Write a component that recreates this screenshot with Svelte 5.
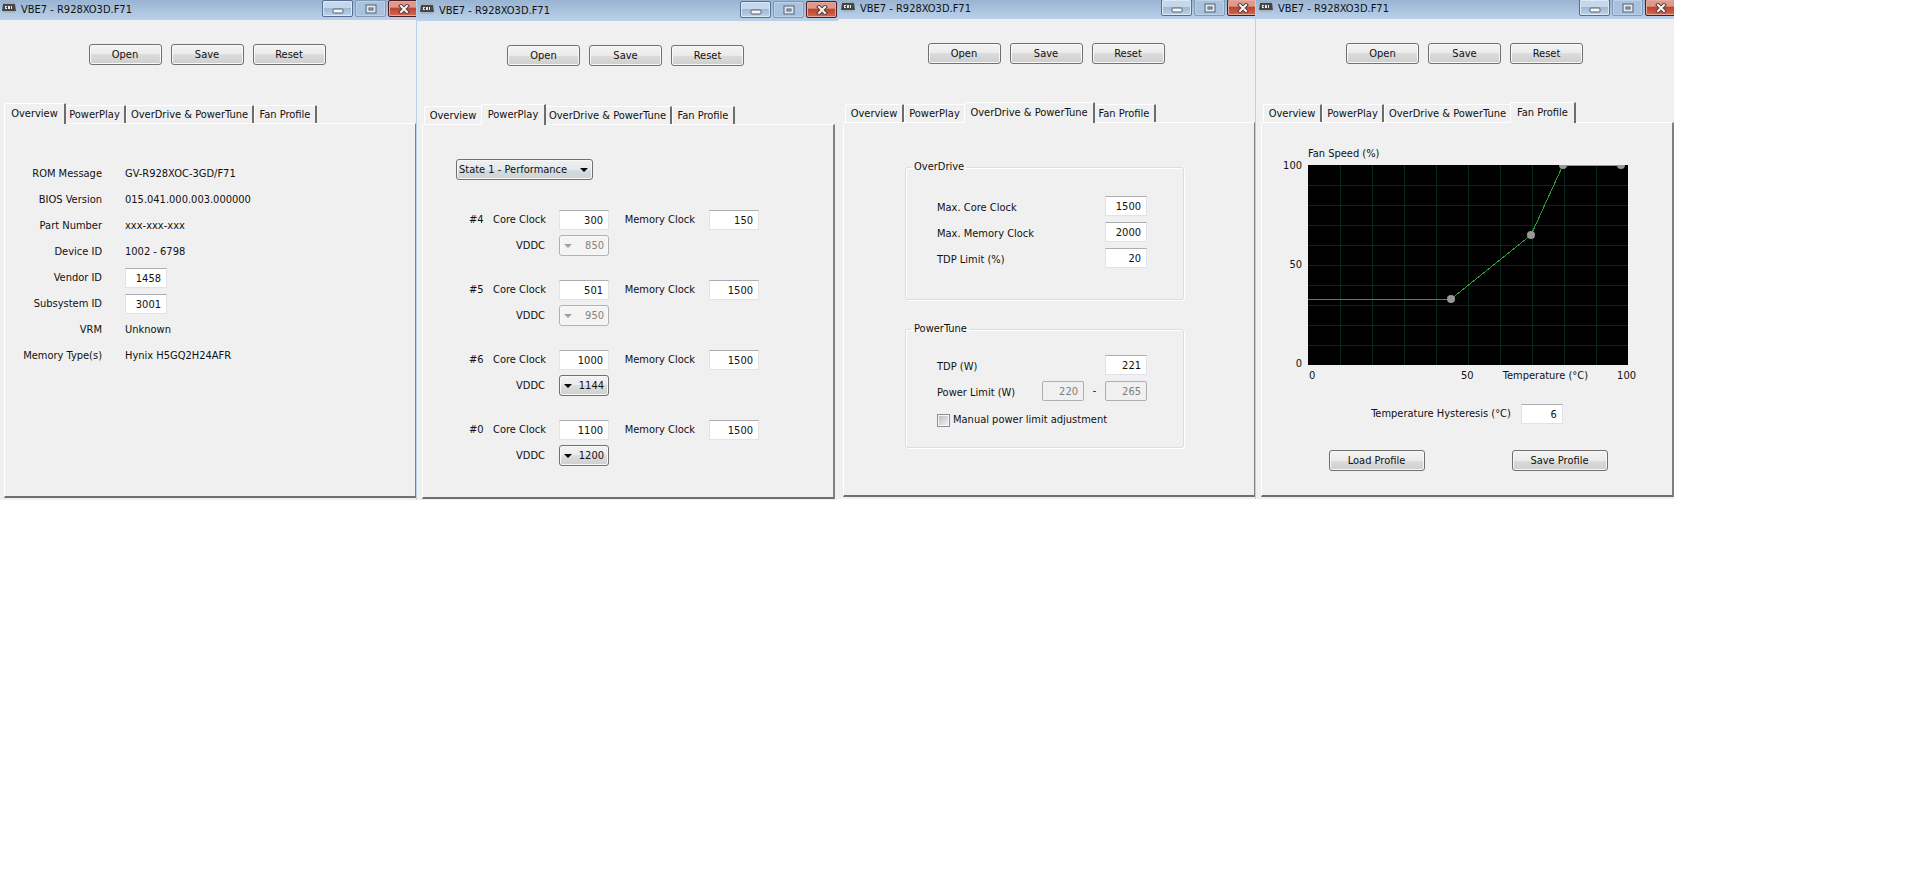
<script lang="ts">
	const file = 'VBE7 - R928XO3D.F71';

	const tabs = [
		{ name: 'Overview', width: 59 },
		{ name: 'PowerPlay', width: 62 },
		{ name: 'OverDrive & PowerTune', width: 128 },
		{ name: 'Fan Profile', width: 63 }
	];

	//each window shows one tab, left and close are how far it is tucked under its neighbours
	const windows = [
		{ active: 0, bar: 20, left: 0, close: -3 },
		{ active: 1, bar: 21, left: 1, close: 1 },
		{ active: 2, bar: 19, left: 1, close: -3 },
		{ active: 3, bar: 19, left: 1, close: -2 }
	];

	const info = [
		{ label: 'ROM Message', value: 'GV-R928XOC-3GD/F71' },
		{ label: 'BIOS Version', value: '015.041.000.003.000000' },
		{ label: 'Part Number', value: 'xxx-xxx-xxx' },
		{ label: 'Device ID', value: '1002 - 6798' },
		{ label: 'Vendor ID', value: '1458', id: 'vendor' },
		{ label: 'Subsystem ID', value: '3001', id: 'subsystem' },
		{ label: 'VRM', value: 'Unknown' },
		{ label: 'Memory Type(s)', value: 'Hynix H5GQ2H24AFR' }
	];

	const states = [
		{ id: 4, core: 300, memory: 150, vddc: 850, locked: true },
		{ id: 5, core: 501, memory: 1500, vddc: 950, locked: true },
		{ id: 6, core: 1000, memory: 1500, vddc: 1144, locked: false },
		{ id: 0, core: 1100, memory: 1500, vddc: 1200, locked: false }
	];

	const overdrive = [
		{ id: 'max-core', label: 'Max. Core Clock', value: 1500 },
		{ id: 'max-memory', label: 'Max. Memory Clock', value: 2000 },
		{ id: 'tdp-limit', label: 'TDP Limit (%)', value: 20 }
	];

	//fan curve in plot units, 320 x 200
	const points = [
		{ x: 143, y: 134 },
		{ x: 223, y: 70 },
		{ x: 255, y: 0 },
		{ x: 313, y: 0 }
	];
	const curve = '0,134 ' + points.map((p) => p.x + ',' + p.y).join(' ');
	const steps = [1, 2, 3, 4, 5, 6, 7, 8, 9];
</script>

{#snippet overview()}
	<div class="info">
		{#each info as row}
			{#if row.id}
				<label for={row.id}>{row.label}</label>
				<input id={row.id} class="narrow" type="text" value={row.value} />
			{:else}
				<span class="key">{row.label}</span>
				<span>{row.value}</span>
			{/if}
		{/each}
	</div>
{/snippet}

{#snippet powerplay()}
	<div class="powerplay">
		<div class="drop state">
			<select aria-label="State">
				<option>State 1 - Performance</option>
			</select>
		</div>
		{#each states as state}
			<div class="clocks">
				<span>#{state.id}</span>
				<label for="core-{state.id}">Core Clock</label>
				<input id="core-{state.id}" type="text" value={state.core} />
				<label for="memory-{state.id}">Memory Clock</label>
				<input id="memory-{state.id}" type="text" value={state.memory} />
				<label class="second" for="vddc-{state.id}">VDDC</label>
				<div class="drop volts" class:locked={state.locked}>
					<select id="vddc-{state.id}" disabled={state.locked}>
						<option>{state.vddc}</option>
					</select>
				</div>
			</div>
		{/each}
	</div>
{/snippet}

{#snippet limits()}
	<div class="limits">
		<fieldset class="overdrive">
			<legend>OverDrive</legend>
			{#each overdrive as row}
				<div class="line">
					<label for={row.id}>{row.label}</label>
					<input id={row.id} class="narrow" type="text" value={row.value} />
				</div>
			{/each}
		</fieldset>
		<fieldset class="powertune">
			<legend>PowerTune</legend>
			<div class="line">
				<label for="tdp">TDP (W)</label>
				<input id="tdp" class="narrow" type="text" value="221" />
			</div>
			<div class="line">
				<label for="power-min">Power Limit (W)</label>
				<input id="power-min" class="narrow" type="text" value="220" disabled />
				<span class="dash">-</span>
				<input class="narrow" type="text" value="265" aria-label="Power Limit maximum" disabled />
			</div>
			<label class="manual"><input type="checkbox" />Manual power limit adjustment</label>
		</fieldset>
	</div>
{/snippet}

{#snippet fan()}
	<div class="fan">
		<span class="caption">Fan Speed (%)</span>
		<div class="speeds">
			<span>100</span>
			<span>50</span>
			<span>0</span>
		</div>
		<svg class="plot" viewBox="0 0 320 200">
			<rect width="320" height="200" fill="#000" />
			<g stroke="#06291f" shape-rendering="crispEdges">
				{#each steps as s}
					<line x1={s * 32} y1="0" x2={s * 32} y2="200" />
					<line x1="0" y1={s * 20} x2="320" y2={s * 20} />
				{/each}
			</g>
			<polyline points={curve} fill="none" stroke="#2f9c34" shape-rendering="crispEdges" />
			<path d="M255 0.5H313" stroke="#35d93a" />
			{#each points as p}
				<circle cx={p.x} cy={p.y} r="4" fill="#989898" />
			{/each}
		</svg>
		<div class="temps">
			<span>0</span>
			<span>50</span>
			<span>Temperature (°C)</span>
			<span>100</span>
		</div>
	</div>
	<div class="hysteresis">
		<label for="hysteresis">Temperature Hysteresis (°C)</label>
		<input id="hysteresis" class="narrow" type="text" value="6" />
	</div>
	<div class="profiles">
		<button class="push">Load Profile</button>
		<button class="push">Save Profile</button>
	</div>
{/snippet}

<main>
	{#each windows as win, i}
		<section
			class="window window-{i}"
			style="--bar: {win.bar}px; --left: {win.left}px; --close: {win.close}px"
		>
			<header>
				<svg class="chip" viewBox="0 0 14 11">
					<path d="M2 0v11M4 0v11M6 0v11M8 0v11M10 0v11M12 0v11" stroke="#a8a596" />
					<path d="M1 2h12l1 7H0z" fill="#45464a" />
					<path d="M3 4h2v1H4v1h1v1H3zM6 4h2v3H6zM9 4h1v3H9z" fill="#e6e8ea" />
				</svg>
				<h1>{file}</h1>
				<button class="sys" aria-label="Minimize">
					<svg viewBox="0 0 12 10">
						<rect x="1" y="5" width="10" height="4" rx="1" fill="#f4f6f8" stroke="#56606e" />
					</svg>
				</button>
				<button class="sys faded" aria-label="Maximize">
					<svg viewBox="0 0 12 10">
						<rect x="1" y="1" width="10" height="8" fill="#dfe8f1" stroke="#56606e" />
						<rect x="4" y="4" width="4" height="2" fill="#a9c0d8" stroke="#56606e" />
					</svg>
				</button>
				<button class="sys close" aria-label="Close">
					<svg viewBox="0 0 12 10">
						<path d="M3 2l6 6M9 2l-6 6" stroke="#5a3a3c" stroke-width="4" stroke-linecap="square" />
						<path d="M3 2l6 6M9 2l-6 6" stroke="#f6f6f6" stroke-width="2" stroke-linecap="square" />
					</svg>
				</button>
			</header>
			<div class="body">
				<div class="toolbar">
					<button class="push">Open</button>
					<button class="push">Save</button>
					<button class="push">Reset</button>
				</div>
				<div class="tabs" role="tablist">
					{#each tabs as tab, t}
						<button
							role="tab"
							aria-selected={t === win.active}
							class:active={t === win.active}
							class:before={t === win.active - 1}
							style="width: {tab.width}px">{tab.name}</button
						>
					{/each}
				</div>
				<div class="panel">
					{#if win.active === 0}
						{@render overview()}
					{:else if win.active === 1}
						{@render powerplay()}
					{:else if win.active === 2}
						{@render limits()}
					{:else}
						{@render fan()}
					{/if}
				</div>
			</div>
		</section>
	{/each}
</main>

<style>
	:global(body) {
		margin: 0;
		background: #fff;
	}

	main {
		display: grid;
		grid-template-columns: 416fr 422fr 417fr 419fr 239fr;
		align-items: start;
		font-family: 'DejaVu Sans Condensed', 'DejaVu Sans', sans-serif;
		font-size: 11px;
		line-height: 14px;
		color: #111;
	}

	button,
	input,
	select {
		box-sizing: border-box;
		margin: 0;
		font: inherit;
		color: inherit;
	}

	.window {
		min-width: 0;
		overflow: hidden;
		background: #f0f0f0;
	}

	.window-1,
	.window-3 {
		border-left: 1px solid #b9d1ea;
	}

	header {
		display: flex;
		align-items: flex-end;
		gap: 2px;
		height: var(--bar);
		padding-left: calc(2px + var(--left));
		background: linear-gradient(#98b4d2, #bbd1ea);
	}

	.chip {
		width: 14px;
		height: 11px;
		margin: 0 3px 7px 0;
	}

	h1 {
		flex: 1;
		margin: 0 0 2px;
		font-size: 11px;
		font-weight: normal;
		line-height: 16px;
		white-space: nowrap;
	}

	.sys {
		display: flex;
		flex: none;
		justify-content: center;
		align-items: center;
		width: 31px;
		height: 17px;
		margin-bottom: 3px;
		padding: 0;
		border: 1px solid #566f8e;
		border-radius: 2px;
		background: linear-gradient(#c5d7ea 45%, #9fb9d5 50%, #bcd3ea);
		box-shadow: inset 0 0 0 1px #dce8f4;
	}

	.sys svg {
		width: 12px;
		height: 10px;
	}

	.faded {
		border-color: #8099b5;
		background: #a9c3de;
		box-shadow: inset 0 0 0 1px #bdd2e8;
	}

	.close {
		margin-right: var(--close);
		border-color: #4a1c24;
		background: linear-gradient(#dd9a8c 40%, #c0432f 50%, #cf6a50);
		box-shadow: inset 0 0 0 1px #e6a99d;
	}

	.body {
		padding: 24px 0 2px calc(4px + var(--left));
	}

	.window-1 .body {
		padding-right: 3px;
		padding-bottom: 1px;
	}

	.toolbar {
		display: flex;
		justify-content: center;
		gap: 9px;
		padding-right: 6px;
	}

	.push {
		width: 73px;
		height: 21px;
		padding: 0;
		border: 1px solid #707070;
		border-radius: 3px;
		background: linear-gradient(#f3f3f3, #ebebeb 50%, #dcdcdc 50%, #cecece);
		box-shadow: inset 0 0 0 1px #f8f8f8;
	}

	.tabs {
		display: flex;
		align-items: flex-end;
		height: 20px;
		margin: 38px 0 0 2px;
	}

	.tabs button {
		display: flex;
		flex: none;
		justify-content: center;
		align-items: center;
		height: 18px;
		padding: 0;
		border: solid;
		border-width: 1px 2px 0 1px;
		border-color: #fff #6d6d6d #fff #fff;
		border-radius: 2px 1px 0 0;
		background: #f0f0f0;
		white-space: nowrap;
	}

	.tabs .before {
		border-right-color: #f0f0f0;
	}

	.tabs .active {
		position: relative;
		box-sizing: content-box;
		height: 20px;
		margin: 0 -2px -1px;
	}

	.panel {
		box-sizing: border-box;
		min-height: 375px;
		border: solid;
		border-width: 1px 2px 2px 1px;
		border-color: #fff #808080 #707070 #fff;
	}

	.window-0 .panel,
	.window-2 .panel {
		border-right-width: 1px;
	}

	input[type='text'] {
		width: 50px;
		height: 20px;
		padding: 0 5px;
		border: 1px solid #e2e3ea;
		border-top-color: #abadb3;
		background: #fff;
		text-align: right;
	}

	input.narrow {
		width: 42px;
	}

	input[type='text']:disabled {
		border-color: #afafaf;
		border-radius: 2px;
		background: #f0f0f0;
		color: #7d7d7d;
	}

	.info {
		display: grid;
		grid-template-columns: 97px 1fr;
		grid-auto-rows: 26px;
		align-items: center;
		column-gap: 23px;
		padding-top: 37px;
	}

	.info label,
	.key {
		text-align: right;
	}

	.powerplay {
		padding: 34px 0 0 33px;
	}

	.drop {
		position: relative;
	}

	.drop::after {
		content: '';
		position: absolute;
		top: 9px;
		right: 5px;
		border: solid transparent;
		border-width: 4px 4px 0;
		border-top-color: #000;
	}

	.drop select {
		display: block;
		width: 100%;
		height: 21px;
		padding: 0 2px;
		border: 1px solid #707070;
		border-radius: 3px;
		appearance: none;
		background: linear-gradient(#f2f2f2, #ebebeb 50%, #dddddd 50%, #cfcfcf);
		box-shadow: inset 0 0 0 1px #f8f8f8;
	}

	.drop.state {
		width: 137px;
		margin-bottom: 30px;
	}

	.drop.state select {
		background: linear-gradient(#eef1f2, #e4e9eb 50%, #d5dcdf 50%, #ccd4d7);
	}

	.volts::after {
		right: auto;
		left: 5px;
	}

	.volts select {
		padding: 0 4px;
		text-align: right;
	}

	.drop.locked select {
		border-color: #adb2b5;
		background: #f4f4f4;
		color: #838383;
		opacity: 1;
	}

	.locked::after {
		border-top-color: #a0a0a0;
	}

	.clocks {
		display: grid;
		grid-template-columns: 24px 52px 64px 86px 64px;
		grid-template-rows: 20px 21px;
		row-gap: 5px;
		align-items: center;
		margin: 0 0 24px 13px;
	}

	.clocks label {
		text-align: right;
		white-space: nowrap;
	}

	.clocks input,
	.volts {
		margin-left: 14px;
	}

	.second {
		grid-column: 2;
	}

	.limits {
		padding: 37px 70px 0 61px;
	}

	fieldset {
		margin: 0;
		padding: 22px 36px 0 31px;
		border: 1px solid #d5dfe5;
		border-radius: 3px;
		box-shadow: inset 1px 1px #fff, 1px 1px #fff;
	}

	legend {
		margin-left: -26px;
		padding: 0 3px;
	}

	.overdrive {
		min-height: 116px;
		margin-bottom: 22px;
	}

	.powertune {
		min-height: 105px;
		padding-top: 19px;
	}

	.line {
		display: flex;
		align-items: center;
		height: 20px;
		margin-bottom: 6px;
	}

	.line label {
		flex: 1;
		padding-top: 4px;
	}

	.dash {
		width: 21px;
		text-align: center;
	}

	.manual {
		display: flex;
		align-items: center;
		gap: 3px;
		margin-top: 12px;
		white-space: nowrap;
	}

	input[type='checkbox'] {
		width: 13px;
		height: 13px;
		border: 1px solid #8e8f8f;
		appearance: none;
		background: linear-gradient(135deg, #b4b9c0, #f6f6f6);
		box-shadow: inset 0 0 0 1px #f4f4f4;
	}

	.fan {
		display: grid;
		grid-template-columns: 40px 1fr;
		column-gap: 6px;
		padding: 24px 44px 0 0;
	}

	.caption {
		grid-column: 2;
		margin-bottom: 4px;
	}

	.speeds {
		display: flex;
		flex-direction: column;
		justify-content: space-between;
		margin: -6px 0;
		text-align: right;
	}

	.plot {
		display: block;
		width: 100%;
	}

	.temps {
		display: grid;
		grid-column: 2;
		grid-template-columns: 153fr 42fr 115fr 16fr;
		margin: 4px -8px 0 1px;
		white-space: nowrap;
	}

	.hysteresis {
		display: flex;
		justify-content: center;
		align-items: center;
		gap: 10px;
		margin: 21px 0 26px;
	}

	.profiles {
		display: flex;
		justify-content: center;
		gap: 87px;
		padding-left: 2px;
	}

	.profiles .push {
		width: 96px;
	}
</style>
